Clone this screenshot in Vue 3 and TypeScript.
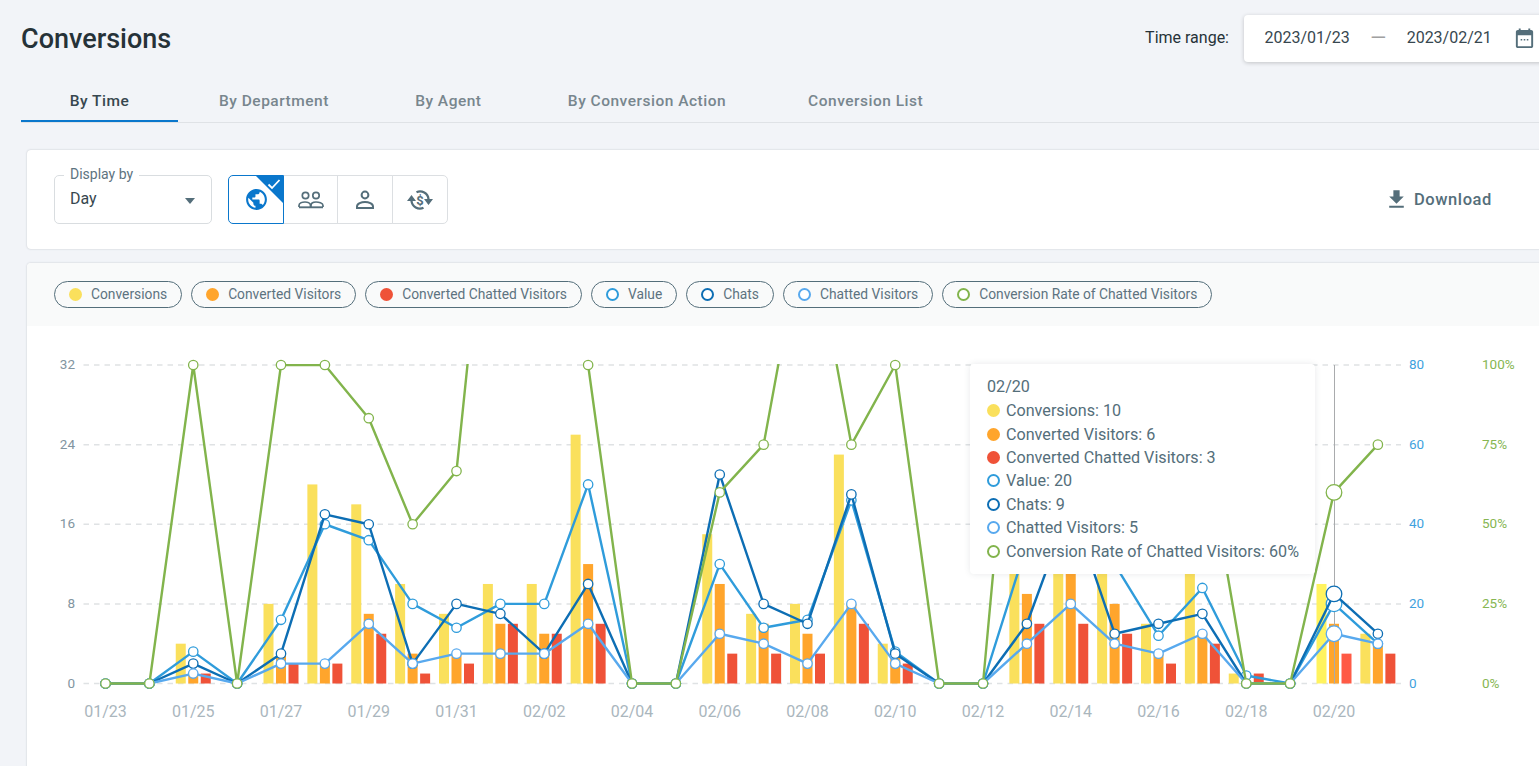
<script setup lang="ts">
const X0 = 105.5
const STEP = 43.875
const BASE = 683.5
const UNIT_L = 318.5 / 32
const UNIT_R = 318.5 / 80
const UNIT_P = 318.5 / 100
const HOVER = 28

const conversions = [0,0,4,0,8,20,18,10,7,10,10,25,0,0,15,7,8,23,4,0,0,16,20,19,6,15,1,0,10,5]
const converted = [0,0,1,0,3,2,7,3,3,6,5,12,0,0,10,6,5,8,3,0,0,9,12,8,3,5,0,0,6,4]
const chattedConv = [0,0,1,0,2,2,5,1,2,6,5,6,0,0,3,3,3,6,2,0,0,6,6,5,2,4,1,0,3,3]
const value = [0,0,8,0,16,40,36,20,14,20,20,50,0,0,30,14,16,46,8,0,0,35,35,30,12,24,2,0,20,10]
const chats = [0,0,2,0,3,17,16,2,8,7,3,10,0,0,21,8,6,19,3,0,0,6,18,5,6,7,0,0,9,5]
const chatted = [0,0,1,0,2,2,6,2,3,3,3,6,0,0,5,4,2,8,2,0,0,4,8,4,3,5,0,0,5,4]
const rate = [0,0,100,0,100,100,83.3,50,66.7,200,167,100,0,0,60,75,150,75,100,0,0,150,75,125,67,80,0,0,60,75]

const px = (i: number) => X0 + i * STEP

function barsOf(data: number[], off: number, color: string, hot: string) {
  return data.map((v, i) => ({
    x: px(i) + off - 5,
    y: BASE - v * UNIT_L,
    h: v * UNIT_L,
    fill: i === HOVER ? hot : color,
    key: `${off}-${i}`,
  }))
}
const bars = [
  ...barsOf(conversions, -12.5, '#fae05c', '#fff35e'),
  ...barsOf(converted, 0, '#ffa52c', '#ffa52c'),
  ...barsOf(chattedConv, 12.5, '#ef5238', '#ff5a45'),
]

function seriesOf(name: string, data: number[], unit: number, color: string, sw: number) {
  const pts = data.map((v, i) => ({ x: px(i), y: BASE - v * unit, v, i }))
  return {
    name,
    color,
    sw,
    d: pts.map((p, i) => `${i ? 'L' : 'M'}${p.x} ${p.y}`).join(' '),
    pts: pts.filter((p) => p.v <= (unit === UNIT_P ? 100 : 1000)),
  }
}
const series = [
  seriesOf('value', value, UNIT_R, '#2f9cdb', 2.4),
  seriesOf('chats', chats, UNIT_L, '#0d6eb4', 2.4),
  seriesOf('chatted', chatted, UNIT_L, '#58a9ee', 2.4),
  seriesOf('rate', rate, UNIT_P, '#82b44c', 2.4),
]

const gridLines = [0, 1, 2, 3, 4].map((i) => ({
  y: BASE - i * 79.625,
  left: String(i * 8),
  right: String(i * 20),
  pct: `${i * 25}%`,
}))

const xLabels = Array.from({ length: 15 }, (_, k) => {
  const d = new Date(Date.UTC(2023, 0, 23 + k * 2))
  const mm = String(d.getUTCMonth() + 1).padStart(2, '0')
  const dd = String(d.getUTCDate()).padStart(2, '0')
  return { x: px(k * 2), t: `${mm}/${dd}` }
})

const legend = [
  { t: 'Conversions', c: '#fae05c', ring: false },
  { t: 'Converted Visitors', c: '#ffa52c', ring: false },
  { t: 'Converted Chatted Visitors', c: '#ef5238', ring: false },
  { t: 'Value', c: '#2f9cdb', ring: true },
  { t: 'Chats', c: '#0d6eb4', ring: true },
  { t: 'Chatted Visitors', c: '#58a9ee', ring: true },
  { t: 'Conversion Rate of Chatted Visitors', c: '#82b44c', ring: true },
]
const tipRows = [
  { t: 'Conversions: 10', c: '#fae05c', ring: false },
  { t: 'Converted Visitors: 6', c: '#ffa52c', ring: false },
  { t: 'Converted Chatted Visitors: 3', c: '#ef5238', ring: false },
  { t: 'Value: 20', c: '#2f9cdb', ring: true },
  { t: 'Chats: 9', c: '#0d6eb4', ring: true },
  { t: 'Chatted Visitors: 5', c: '#58a9ee', ring: true },
  { t: 'Conversion Rate of Chatted Visitors: 60%', c: '#82b44c', ring: true },
]
const tabs = ['By Time', 'By Department', 'By Agent', 'By Conversion Action', 'Conversion List']
</script>

<template>
  <div class="page">
    <div class="inner">
      <header class="top">
        <h1 class="title">Conversions</h1>
        <div class="range">
          <span class="range-label">Time range:</span>
          <div class="range-box">
            <span>2023/01/23</span>
            <span class="dash">—</span>
            <span>2023/02/21</span>
            <svg class="cal" width="23" height="23" viewBox="0 0 24 24">
              <path fill="#546e7a" d="M19 3h-1V1.500h-2V3H8V1.500H6V3H5C3.900 3 3 3.900 3 5v15c0 1.100.900 2 2 2h14c1.100 0 2-.900 2-2V5c0-1.100-.900-2-2-2zm0 17H5V8.500h14V20z" />
              <path fill="#546e7a" d="M8 12.500h1.600v1.600H8zM11.200 12.500h1.600v1.600h-1.600zM14.400 12.500H16v1.600h-1.600z" />
            </svg>
          </div>
        </div>
      </header>

      <nav class="tabs">
        <div v-for="(t, i) in tabs" :key="t" class="tab" :class="{ active: i === 0 }">{{ t }}</div>
      </nav>

      <section class="card toolbar">
        <div class="select">
          <span class="select-label">Display by</span>
          <span class="select-value">Day</span>
          <span class="caret"></span>
        </div>
        <div class="group">
          <button class="gbtn on">
            <svg width="25" height="25" viewBox="0 0 24 24">
              <path fill="#0a77cc" d="M12 2C6.480 2 2 6.480 2 12s4.480 10 10 10 10-4.480 10-10S17.520 2 12 2zm-1 17.930c-3.950-.490-7-3.850-7-7.930 0-.620.080-1.210.210-1.790L9 15v1c0 1.100.900 2 2 2v1.930zm6.900-2.540c-.260-.810-1-1.390-1.900-1.390h-1v-3c0-.550-.450-1-1-1H8v-2h2c.550 0 1-.450 1-1V7h2c1.100 0 2-.900 2-2v-.410c2.930 1.190 5 4.060 5 7.410 0 2.080-.800 3.970-2.100 5.390z" />
            </svg>
            <span class="corner"></span>
            <svg class="tick" width="14" height="12" viewBox="0 0 14 12">
              <path d="M1.500 6.500 5 10l7.500-8" fill="none" stroke="#fff" stroke-width="1.800" />
            </svg>
          </button>
          <button class="gbtn">
            <svg width="26" height="18" viewBox="0 0 26 18" fill="none" stroke="#546e7a" stroke-width="1.700">
              <circle cx="7.500" cy="4.500" r="3.200" />
              <circle cx="18" cy="4.500" r="3.200" />
              <path d="M1 16v-1.500c0-2.500 3.500-3.500 6-3.500 2.300 0 5.500 1 5.500 3.500V16M13 16v-1.500c0-2.500 2.800-3.500 5-3.500 2.500 0 7 1 7 3.500V16" />
              <path d="M1 16.300h24" stroke-width="1.900" />
            </svg>
          </button>
          <button class="gbtn">
            <svg width="20" height="20" viewBox="0 0 20 20" fill="none" stroke="#546e7a" stroke-width="2">
              <circle cx="10" cy="5" r="3.400" />
              <path d="M2 18v-1.500C2 13.500 6.500 12 10 12s8 1.500 8 4.500V18z" />
            </svg>
          </button>
          <button class="gbtn">
            <svg width="26" height="22" viewBox="0 0 26 22">
              <path d="M21.500 10A8.500 8.500 0 0 0 9.500 3.200M4.500 12A8.500 8.500 0 0 0 16.500 18.800" fill="none" stroke="#546e7a" stroke-width="2.300" />
              <path d="M0 12 4.500 6 9 12zM17 10 21.500 16 26 10z" fill="#546e7a" />
              <text x="13" y="15.500" text-anchor="middle" class="dollar">$</text>
            </svg>
          </button>
        </div>
        <div class="download">
          <svg width="25" height="25" viewBox="0 0 24 24">
            <path fill="#546e7a" d="M19 9h-4V3H9v6H5l7 7 7-7zM5 18v2h14v-2H5z" />
          </svg>
          <span>Download</span>
        </div>
      </section>

      <section class="card chart-card">
        <div class="legend">
          <div v-for="l in legend" :key="l.t" class="pill">
            <i class="dot" :class="{ ring: l.ring }" :style="{ color: l.c }"></i>
            <span>{{ l.t }}</span>
          </div>
        </div>
        <div class="plot">
          <svg class="chart" width="1533" height="440" viewBox="27 326 1533 440">
            <defs>
              <clipPath id="plotclip"><rect x="60" y="364" width="1360" height="340" /></clipPath>
            </defs>
            <g v-for="g in gridLines" :key="g.y">
              <line x1="83.500" x2="1401" :y1="g.y" :y2="g.y" stroke="#dfe2e4" stroke-width="1.500" stroke-dasharray="5.500 5" />
              <text x="75" :y="g.y + 4" text-anchor="end" class="axl">{{ g.left }}</text>
              <text x="1409" :y="g.y + 4" class="axr">{{ g.right }}</text>
              <text x="1482" :y="g.y + 4" class="axp">{{ g.pct }}</text>
            </g>
            <text v-for="l in xLabels" :key="l.t" :x="l.x" y="717" text-anchor="middle" class="axx">{{ l.t }}</text>
            <rect v-for="b in bars" :key="b.key" :x="b.x" :y="b.y" width="10" :height="b.h" :fill="b.fill" />
            <line x1="1334.500" x2="1334.500" y1="365" y2="683.500" stroke="#a9abad" stroke-width="1" />
            <g v-for="s in series" :key="s.name">
              <path :d="s.d" fill="none" :stroke="s.color" :stroke-width="s.sw" stroke-linejoin="bevel" clip-path="url(#plotclip)" />
              <circle
                v-for="p in s.pts"
                :key="p.i"
                :cx="p.x"
                :cy="p.y"
                :r="p.i === HOVER ? 7.800 : 4.700"
                fill="#fff"
                :stroke="s.color"
                stroke-width="1.300"
              />
            </g>
          </svg>
          <div class="tip">
            <div class="tip-head">02/20</div>
            <div v-for="r in tipRows" :key="r.t" class="tip-row">
              <i class="dot" :class="{ ring: r.ring }" :style="{ color: r.c }"></i>
              <span>{{ r.t }}</span>
            </div>
          </div>
        </div>
      </section>
    </div>
  </div>
</template>

<style>
html, body { margin: 0; overflow: hidden; background: #f2f4f8; }
</style>

<style scoped>
.page {
  width: 1539px;
  height: 766px;
  overflow: hidden;
  background: #f2f4f8;
  font-family: Roboto, "Liberation Sans", sans-serif;
}
.inner { width: 1560px; padding-left: 21px; box-sizing: border-box; }
.top {
  display: flex;
  justify-content: space-between;
  align-items: flex-start;
  height: 80px;
  padding-top: 15px;
  box-sizing: border-box;
}
.title {
  margin: 0;
  font-size: 27px;
  font-weight: 500;
  line-height: 48px;
  color: #263238;
}
.range { display: flex; align-items: flex-start; gap: 15px; }
.range-label { font-size: 16px; line-height: 45px; color: #263238; }
.range-box {
  width: 316px;
  height: 47px;
  box-sizing: border-box;
  padding: 0 0 2px 20.500px;
  display: flex;
  align-items: center;
  background: #fff;
  border-radius: 4px;
  box-shadow: 0 1px 4px rgba(0, 0, 0, 0.2);
  font-size: 16px;
  color: #37474f;
}
.dash { width: 57px; text-align: center; color: #a0a0a0; font-size: 20.500px; line-height: 24px; }
.cal { margin-left: 21.500px; margin-top: 2px; }
.tabs {
  display: flex;
  height: 43px;
  box-sizing: border-box;
  border-bottom: 1px solid #dfe2e6;
}
.tab {
  min-width: 157px;
  box-sizing: border-box;
  padding: 0 41px;
  height: 42px;
  line-height: 43px;
  text-align: center;
  font-size: 15.500px;
  font-weight: 500;
  letter-spacing: 0.5px;
  color: #78868e;
}
.tab.active { color: #37474f; border-bottom: 2px solid #0a77cc; }
.card {
  margin-left: 6px;
  background: #fff;
  border-radius: 4px;
  box-shadow: 0 0 2px rgba(60, 70, 80, 0.28);
}
.toolbar {
  margin-top: 27px;
  height: 99px;
  display: flex;
  align-items: center;
  padding-left: 27px;
  position: relative;
}
.select {
  position: relative;
  width: 158px;
  height: 49px;
  box-sizing: border-box;
  border: 1px solid #d9dde0;
  border-radius: 5px;
  display: flex;
  align-items: center;
  padding: 0 0 2px 15px;
}
.select-label {
  position: absolute;
  left: 9px;
  top: -10px;
  padding: 0 6px;
  background: #fff;
  font-size: 14px;
  line-height: 16px;
  color: #5d7380;
}
.select-value { font-size: 16px; color: #37474f; }
.caret {
  position: absolute;
  right: 16px;
  top: 22px;
  border-left: 5.500px solid transparent;
  border-right: 5.500px solid transparent;
  border-top: 6px solid #546e7a;
}
.group { display: flex; margin-left: 16px; }
.gbtn {
  position: relative;
  width: 56px;
  height: 49px;
  box-sizing: border-box;
  padding: 0;
  margin-left: -1px;
  display: flex;
  align-items: center;
  justify-content: center;
  background: #fff;
  border: 1px solid #dcdfe2;
  overflow: hidden;
}
.gbtn:nth-child(2) { width: 55px; }
.gbtn:first-child { margin-left: 0; border-radius: 5px 0 0 5px; }
.gbtn:last-child { border-radius: 0 5px 5px 0; }
.gbtn.on { border-color: #0a77cc; z-index: 1; }
.corner {
  position: absolute;
  top: 0;
  right: 0;
  border-top: 27px solid #0a77cc;
  border-left: 27px solid transparent;
}
.tick { position: absolute; top: 2px; right: 2px; }
.dollar { font-size: 13px; font-weight: 700; fill: #546e7a; font-family: Roboto, sans-serif; }
.download {
  margin-left: auto;
  margin-right: 68px;
  display: flex;
  align-items: center;
  gap: 5px;
  font-size: 16.500px;
  font-weight: 500;
  letter-spacing: 0.6px;
  color: #546e7a;
}
.chart-card { margin-top: 14px; height: 520px; }
.legend {
  height: 63px;
  box-sizing: border-box;
  padding: 18px 0 0 27px;
  display: flex;
  gap: 9px;
  background: #f9fafa;
  border-radius: 4px 4px 0 0;
}
.pill {
  height: 27px;
  box-sizing: border-box;
  padding: 0 14px 1px 14px;
  display: flex;
  align-items: center;
  gap: 9px;
  border: 1px solid #546e7a;
  border-radius: 14px;
  font-size: 13.800px;
  color: #5d7380;
  white-space: nowrap;
}
.dot {
  flex: none;
  display: block;
  width: 13px;
  height: 13px;
  box-sizing: border-box;
  border-radius: 50%;
  background: currentColor;
}
.dot.ring { background: #fff; border: 2px solid currentColor; }
.plot { position: relative; }
.chart { display: block; }
.axl { font-size: 13.500px; fill: #8295a1; font-family: Roboto, sans-serif; }
.axr { font-size: 13.500px; fill: #3fa2de; font-family: Roboto, sans-serif; }
.axp { font-size: 13.500px; fill: #86b652; font-family: Roboto, sans-serif; }
.axx { font-size: 16px; fill: #aab6bd; font-family: Roboto, sans-serif; }
.tip {
  position: absolute;
  left: 943px;
  top: 38px;
  width: 345px;
  height: 210px;
  box-sizing: border-box;
  padding: 11px 17px;
  background: #fff;
  border-radius: 4px;
  box-shadow: 0 0 6px rgba(60, 70, 80, 0.12);
  font-size: 16.150px;
  color: #546e7a;
}
.tip-head { line-height: 24px; }
.tip-row { display: flex; align-items: center; gap: 6px; height: 23.400px; white-space: nowrap; }
</style>
